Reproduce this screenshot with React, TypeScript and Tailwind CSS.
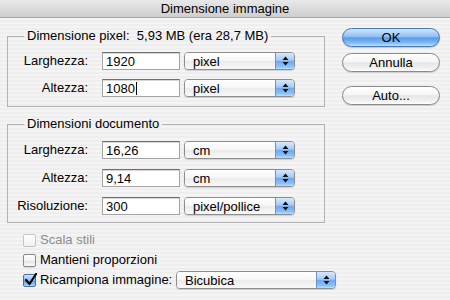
import React from 'react';

const FONT = "font-['Liberation_Sans','DejaVu_Sans',sans-serif]";

function Arrows() {
    return (
        <svg width="7" height="10" viewBox="0 0 7 10" className="block">
            <path d="M3.5 0.5 L6.5 4 L0.5 4 Z" fill="#111" />
            <path d="M3.5 9.5 L6.5 6 L0.5 6 Z" fill="#111" />
        </svg>
    );
}

function PopUp({ value, width }: { value: string; width: string }) {
    return (
        <div
            className={`${width} flex h-[18px] shrink-0 overflow-hidden rounded-[4px] border border-[#8d8d8d] shadow-[0_1px_1px_rgba(0,0,0,0.15)]`}
        >
            <div className="flex flex-1 items-center whitespace-nowrap bg-[linear-gradient(180deg,#ffffff_0%,#f6f6f6_50%,#ebebeb_52%,#f8f8f8_100%)] pl-[8px] text-[13px] leading-none text-black">
                {value}
            </div>
            <div className="flex w-[19px] items-center justify-center border-l border-[#6e93c4] bg-[linear-gradient(180deg,#d6e8fc_0%,#a6cbf6_45%,#6ea8ef_52%,#8cc1f7_85%,#b9e0fd_100%)]">
                <Arrows />
            </div>
        </div>
    );
}

function TextField({ value, caret }: { value: string; caret?: boolean }) {
    return (
        <div className="flex h-[18px] w-[78px] items-center border border-[#a3a3a3] border-t-[#6f6f6f] bg-white pl-[3px] text-[13px] leading-none text-black shadow-[inset_0_1px_0_#d6d6d6]">
            {value}
            {caret && <span className="ml-px inline-block h-[13px] w-px bg-black" />}
        </div>
    );
}

function FieldRow({
    label,
    value,
    unit,
    caret,
}: {
    label: string;
    value: string;
    unit: string;
    caret?: boolean;
}) {
    return (
        <div className="flex h-[18px] items-center whitespace-nowrap">
            <span className="w-[80px] text-right text-[13px] text-black">{label}</span>
            <div className="ml-[14px]">
                <TextField value={value} caret={caret} />
            </div>
            <div className="ml-[4px]">
                <PopUp value={unit} width="w-[111px]" />
            </div>
        </div>
    );
}

function AquaButton({ label, primary }: { label: string; primary?: boolean }) {
    return (
        <button
            className={
                primary
                    ? 'flex h-[19px] w-[98px] items-center justify-center rounded-full border border-[#4a78b4] bg-[linear-gradient(180deg,#d2e6fb_0%,#8fc0f5_45%,#5a9cec_52%,#7db8f5_80%,#bde3fe_100%)] text-[13px] text-black shadow-[0_1px_1px_rgba(0,0,0,0.2)]'
                    : 'flex h-[19px] w-[98px] items-center justify-center rounded-full border border-[#8a8a8a] bg-[linear-gradient(180deg,#ffffff_0%,#f5f5f5_45%,#e6e6e6_52%,#f2f2f2_85%,#ffffff_100%)] text-[13px] text-black shadow-[0_1px_1px_rgba(0,0,0,0.15)]'
            }
        >
            {label}
        </button>
    );
}

function CheckBox({ checked, disabled }: { checked?: boolean; disabled?: boolean }) {
    if (checked) {
        return (
            <div className="relative h-[13px] w-[13px] shrink-0 rounded-[2px] border border-[#4a6fa8] bg-[linear-gradient(180deg,#cfe4fb_0%,#86b9f3_50%,#5d9eec_55%,#a9d5fc_100%)]">
                <svg width="14" height="14" viewBox="0 0 14 14" className="absolute -top-[2px] left-0">
                    <path d="M2 7 L5.5 11 L12 1" stroke="#000" strokeWidth="2.2" fill="none" strokeLinecap="round" strokeLinejoin="round" />
                </svg>
            </div>
        );
    }
    return (
        <div
            className={
                disabled
                    ? 'h-[13px] w-[13px] shrink-0 rounded-[2px] border border-[#c4c4c4] bg-[linear-gradient(180deg,#ffffff,#f0f0f0)]'
                    : 'h-[13px] w-[13px] shrink-0 rounded-[2px] border border-[#8a8a8a] bg-[linear-gradient(180deg,#ffffff_0%,#f2f2f2_50%,#e4e4e4_55%,#fafafa_100%)] shadow-[0_1px_1px_rgba(0,0,0,0.12)]'
            }
        />
    );
}

export default function App() {
    return (
        <div
            className={`${FONT} h-[300px] w-[450px] overflow-hidden bg-[repeating-linear-gradient(180deg,#eeeeee_0px,#eeeeee_2px,#f4f4f4_2px,#f4f4f4_4px)]`}
        >
            <div className="flex h-[18px] items-center justify-center border-b border-[#a9a9a9] bg-[linear-gradient(180deg,#e8e8e8,#cfcfcf)] text-[13px] text-black">
                Dimensione immagine
            </div>

            <div className="flex px-[7px]">
                <div className="w-[318px] shrink-0">
                    <fieldset className="mt-[10px] border border-[#b3b3b3] px-0 pb-[9px] pt-[8px]">
                        <legend className="ml-[16px] h-[16px] whitespace-nowrap px-[3px] text-[13px] leading-[16px] text-black">
                            Dimensione pixel:&nbsp; 5,93 MB (era 28,7 MB)
                        </legend>
                        <div className="flex flex-col gap-[9px]">
                            <FieldRow label="Larghezza:" value="1920" unit="pixel" />
                            <FieldRow label="Altezza:" value="1080" unit="pixel" caret />
                        </div>
                    </fieldset>

                    <fieldset className="mt-[9px] border border-[#b3b3b3] px-0 pb-[7px] pt-[9px]">
                        <legend className="ml-[16px] h-[16px] whitespace-nowrap px-[3px] text-[13px] leading-[16px] text-black">
                            Dimensioni documento
                        </legend>
                        <div className="flex flex-col gap-[10px]">
                            <FieldRow label="Larghezza:" value="16,26" unit="cm" />
                            <FieldRow label="Altezza:" value="9,14" unit="cm" />
                            <FieldRow label="Risoluzione:" value="300" unit="pixel/pollice" />
                        </div>
                    </fieldset>

                    <div className="mt-[7px] flex flex-col whitespace-nowrap pl-[16px] text-[13px]">
                        <div className="flex h-[20px] items-center gap-[4px] text-[#8c8c8c]">
                            <CheckBox disabled />
                            <span>Scala stili</span>
                        </div>
                        <div className="flex h-[20px] items-center gap-[4px] text-black">
                            <CheckBox />
                            <span>Mantieni proporzioni</span>
                        </div>
                        <div className="flex h-[20px] items-center gap-[4px] text-black">
                            <CheckBox checked />
                            <span className="w-[132px] shrink-0">Ricampiona immagine:</span>
                            <PopUp value="Bicubica" width="w-[160px]" />
                        </div>
                    </div>
                </div>

                <div className="ml-[17px] flex w-[98px] shrink-0 flex-col">
                    <div className="mt-[10px]">
                        <AquaButton label="OK" primary />
                    </div>
                    <div className="mt-[6px]">
                        <AquaButton label="Annulla" />
                    </div>
                    <div className="mt-[14px]">
                        <AquaButton label="Auto..." />
                    </div>
                </div>
            </div>
        </div>
    );
}
